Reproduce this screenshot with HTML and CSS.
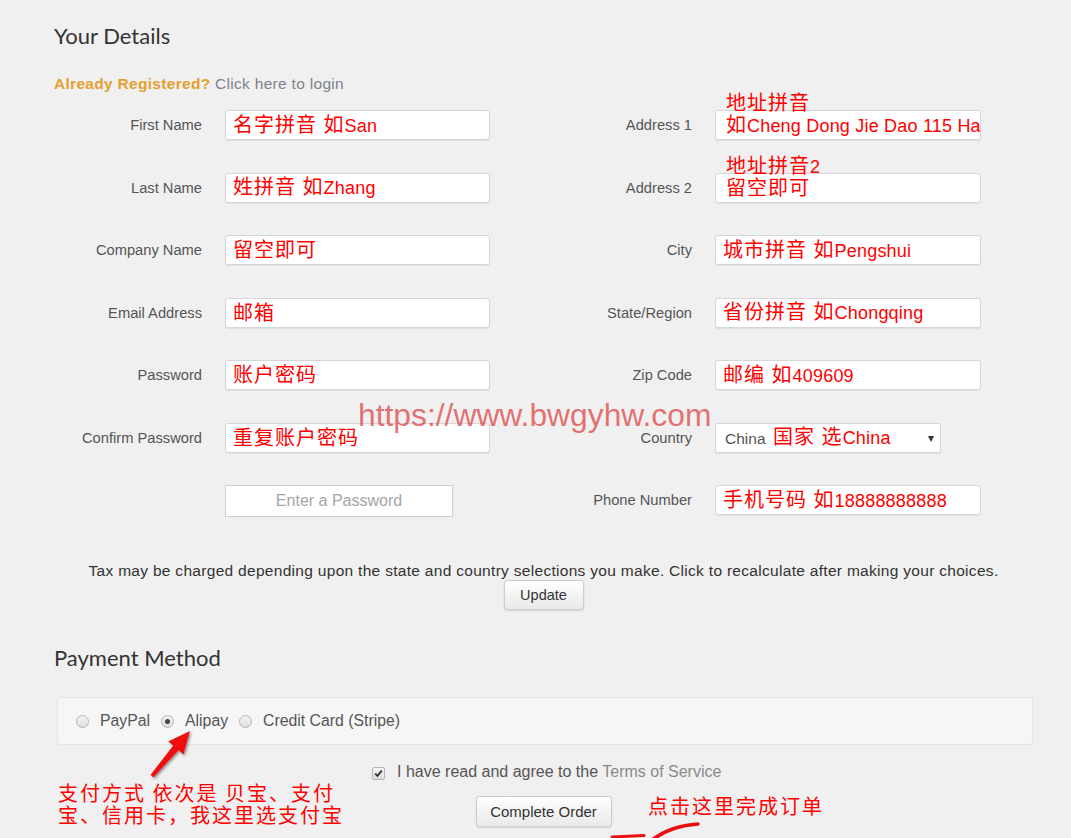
FILE: index.html
```html
<!DOCTYPE html>
<html lang="zh-CN">
<head>
<meta charset="utf-8">
<title>Your Details</title>
<link rel="stylesheet" href="styles.css">
</head>
<body>
<div class="page">
  <h2 class="heading">Your Details</h2>
  <p class="login"><span class="reg">Already Registered?</span> <span class="login-link">Click here to login</span></p>

  <div class="form-grid">
    <div class="lbl">First Name</div>
    <div class="field"><span class="val">名字拼音 如<span class="lt">San</span></span></div>
    <div class="lbl">Address 1</div>
    <div class="field"><span class="note">地址拼音</span><span class="val val-addr">如<span class="lt">Cheng Dong Jie Dao 115 Hao</span></span></div>

    <div class="lbl">Last Name</div>
    <div class="field"><span class="val">姓拼音 如<span class="lt">Zhang</span></span></div>
    <div class="lbl">Address 2</div>
    <div class="field"><span class="note">地址拼音<span class="lt">2</span></span><span class="val val-addr">留空即可</span></div>

    <div class="lbl">Company Name</div>
    <div class="field"><span class="val">留空即可</span></div>
    <div class="lbl">City</div>
    <div class="field"><span class="val">城市拼音 如<span class="lt">Pengshui</span></span></div>

    <div class="lbl">Email Address</div>
    <div class="field"><span class="val">邮箱</span></div>
    <div class="lbl">State/Region</div>
    <div class="field"><span class="val">省份拼音 如<span class="lt">Chongqing</span></span></div>

    <div class="lbl">Password</div>
    <div class="field"><span class="val">账户密码</span></div>
    <div class="lbl">Zip Code</div>
    <div class="field"><span class="val">邮编 如<span class="lt">409609</span></span></div>

    <div class="lbl">Confirm Password</div>
    <div class="field"><span class="val">重复账户密码</span></div>
    <div class="lbl">Country</div>
    <div class="field select"><span class="val"><span class="opt">China</span> 国家 选<span class="lt">China</span></span><span class="caret"></span></div>

    <div class="lbl"></div>
    <div class="field pw-strength">Enter a Password</div>
    <div class="lbl">Phone Number</div>
    <div class="field"><span class="val">手机号码 如<span class="lt">18888888888</span></span></div>
  </div>

  <div class="tax">
    <p class="tax-text">Tax may be charged depending upon the state and country selections you make. Click to recalculate after making your choices.</p>
    <button class="btn btn-update">Update</button>
  </div>

  <h2 class="heading heading-pay">Payment Method</h2>
  <div class="pay-box">
    <label class="radio"><span class="dot"></span>PayPal</label>
    <label class="radio"><span class="dot checked"></span>Alipay</label>
    <label class="radio"><span class="dot"></span>Credit Card (Stripe)</label>
  </div>

  <div class="terms">
    <span class="check"><svg viewBox="0 0 11 11" width="11" height="11"><path d="M2.2 5.6 L4.5 7.9 L8.8 2.6" fill="none" stroke="#333" stroke-width="1.8"/></svg></span>
    I have read and agree to the <span class="tos">Terms of Service</span>
  </div>
  <div class="order">
    <button class="btn btn-order">Complete Order</button>
  </div>

  <div class="watermark">https://www.bwgyhw.com</div>
  <div class="anno anno-pay">支付方式 依次是 贝宝、支付<br>宝、信用卡，我这里选支付宝</div>
  <div class="anno anno-order">点击这里完成订单</div>
  <svg class="arrow" viewBox="0 0 50 58" width="50" height="58">
    <defs>
      <filter id="sh" x="-30%" y="-30%" width="160%" height="160%">
        <feDropShadow dx="1.5" dy="1.5" stdDeviation="1.2" flood-color="#555" flood-opacity="0.6"/>
      </filter>
    </defs>
    <polygon points="45,6 38.5,29.5 33.6,25.2 8.3,52.5 5.6,49.8 28.2,20.6 23.2,16.6" fill="#f01010" filter="url(#sh)"/>
  </svg>
  <svg class="stroke" viewBox="0 0 120 30" width="120" height="30">
    <path d="M12 27 L44 25.5" fill="none" stroke="#e81010" stroke-width="3" stroke-linecap="round"/>
    <path d="M52 30 Q70 16 98 14" fill="none" stroke="#e81010" stroke-width="3.5" stroke-linecap="round"/>
  </svg>
</div>
</body>
</html>
```

FILE: styles.css
```css
html, body {
  margin: 0;
  padding: 0;
  background: #f0f0f0;
}

body {
  font-family: "Liberation Sans", Arial, sans-serif;
  font-size: 14px;
  color: #555;
}

.page {
  position: relative;
  width: 979px;
  height: 838px;
  padding: 22px 0 0 54px;
  box-sizing: content-box;
  overflow: hidden;
}

.heading {
  margin: 0;
  font-family: Lato, "Open Sans", sans-serif;
  font-weight: 400;
  font-size: 22px;
  line-height: 28px;
  color: #333;
}

.login {
  margin: 24px 0 0;
  line-height: 20px;
  font-size: 15.5px;
  letter-spacing: 0.3px;
}

.reg {
  color: #e59f2f;
  font-weight: bold;
}

.login-link {
  color: #7d838a;
}

.form-grid {
  margin-top: 16px;
  display: grid;
  grid-template-columns: 148px 265px 179px 266px;
  grid-auto-rows: 30px;
  column-gap: 23px;
  row-gap: 32.5px;
  align-items: center;
}

.lbl {
  text-align: right;
  color: #555;
  font-size: 14.7px;
  white-space: nowrap;
}

.field {
  position: relative;
  height: 30px;
  box-sizing: border-box;
  background: #fff;
  border: 1px solid #d6d6d6;
  border-radius: 3px;
  box-shadow: 0 1px 1px rgba(0,0,0,0.07);
  display: flex;
  align-items: center;
  padding: 0 0 0 7px;
  overflow: visible;
}

.val {
  display: block;
  overflow: hidden;
  white-space: nowrap;
  color: #f00;
  font-family: "Liberation Sans", "Noto Sans CJK SC", sans-serif;
  font-size: 20px;
  letter-spacing: 1px;
  line-height: 24px;
}

.lt {
  font-family: "Liberation Sans", Arial, sans-serif;
  font-size: 18px;
  letter-spacing: 0.2px;
}

.val-addr {
  margin-left: 3px;
}

.note {
  position: absolute;
  left: 10px;
  top: -19px;
  color: #f00;
  font-family: "Liberation Sans", "Noto Sans CJK SC", sans-serif;
  font-size: 20px;
  letter-spacing: 1px;
  line-height: 22px;
  white-space: nowrap;
}

.select {
  width: 226px;
  padding-left: 9px;
}

.opt {
  color: #555;
  font-family: "Liberation Sans", Arial, sans-serif;
  font-size: 15.5px;
  letter-spacing: 0;
  margin-right: 1px;
}

.caret {
  position: absolute;
  right: 6px;
  top: 12px;
  width: 0;
  height: 0;
  border-left: 3.5px solid transparent;
  border-right: 3.5px solid transparent;
  border-top: 6px solid #333;
}

.pw-strength {
  width: 228px;
  height: 32px;
  margin-top: 2px;
  padding: 0;
  justify-content: center;
  border-radius: 0;
  border-color: #cfcfcf;
  color: #a5a5a5;
  font-size: 16px;
  box-shadow: none;
}

.tax {
  margin-top: 47px;
  text-align: center;
}

.tax-text {
  margin: 0;
  line-height: 18px;
  color: #333;
  font-size: 15.5px;
  letter-spacing: 0.3px;
}

.btn {
  font-family: "Liberation Sans", Arial, sans-serif;
  font-size: 14px;
  color: #333;
  background: linear-gradient(#ffffff, #e9e9e9);
  border: 1px solid #cdcdcd;
  border-radius: 3px;
  box-shadow: 0 1px 2px rgba(0,0,0,0.12);
  cursor: pointer;
}

.btn-update {
  margin-top: 0;
  width: 80px;
  height: 30px;
  font-size: 14.5px;
}

.heading-pay {
  margin-top: 34px;
}

.pay-box {
  margin: 25px 0 0 3px;
  height: 48px;
  box-sizing: border-box;
  background: #f6f6f6;
  border: 1px solid #e4e4e4;
  border-radius: 3px;
  display: flex;
  align-items: center;
  padding-left: 18px;
  gap: 11px;
}

.radio {
  display: flex;
  align-items: center;
  gap: 11px;
  color: #555;
  font-size: 15.8px;
}

.dot {
  width: 11px;
  height: 11px;
  border-radius: 50%;
  border: 1px solid #b5b5b5;
  background: linear-gradient(#f4f4f4, #dcdcdc);
  position: relative;
}

.dot.checked::after {
  content: "";
  position: absolute;
  left: 3px;
  top: 3px;
  width: 5px;
  height: 5px;
  border-radius: 50%;
  background: #444;
}

.terms {
  margin-top: 18px;
  padding-left: 6px;
  text-align: center;
  line-height: 18px;
  font-size: 16px;
  color: #555;
}

.check {
  display: inline-block;
  width: 13px;
  height: 13px;
  border: 1px solid #b5b5b5;
  border-radius: 2px;
  background: linear-gradient(#f6f6f6, #dedede);
  vertical-align: -2px;
  margin-right: 8px;
  box-sizing: border-box;
  line-height: 0;
}

.tos {
  color: #8a8a8a;
}

.order {
  margin-top: 15px;
  text-align: center;
}

.btn-order {
  width: 136px;
  height: 31px;
  font-size: 15px;
}

.watermark {
  position: absolute;
  left: 358px;
  top: 397px;
  font-family: "Liberation Sans", Arial, sans-serif;
  font-size: 31.8px;
  line-height: 36px;
  color: rgba(222, 70, 70, 0.75);
  white-space: nowrap;
}

.anno {
  position: absolute;
  color: #f00;
  font-family: "Noto Sans CJK SC", sans-serif;
  font-size: 20px;
  line-height: 22px;
  letter-spacing: 2px;
  white-space: nowrap;
}

.anno-pay {
  left: 58px;
  top: 782px;
}

.anno-order {
  left: 648px;
  top: 795px;
}

.arrow {
  position: absolute;
  left: 145px;
  top: 725px;
}

.stroke {
  position: absolute;
  left: 600px;
  top: 810px;
}
```
